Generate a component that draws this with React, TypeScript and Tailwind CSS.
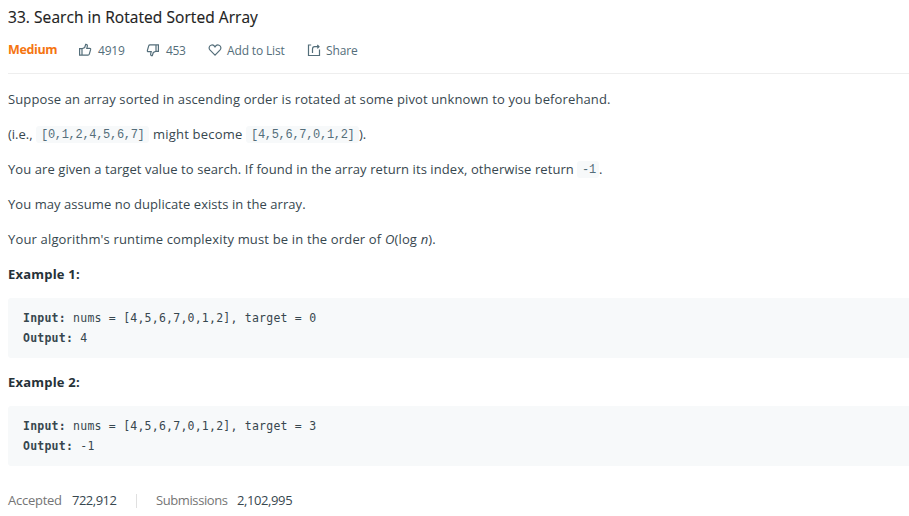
import type { ReactNode } from "react";

const iconProps = {
  viewBox: "0 0 14 14",
  fill: "none",
  stroke: "currentColor",
  strokeWidth: 1.2,
  className: "h-3.5 w-3.5 shrink-0",
};

const Thumb = () => (
  <svg {...iconProps}>
    <path d="M4 5.6H1.6V12.2H4ZM4 5.8L6.7 4.5L7.7 1.3C9.1 1.2 9.6 2.3 9.3 3.4L8.8 5.3H11.6C12.5 5.3 12.8 5.9 12.6 6.7L11.3 11.2C11.1 11.9 10.7 12.2 10 12.2H4" />
  </svg>
);
const ThumbDown = () => (
  <svg {...iconProps}>
    <path d="M10 8.4H12.4V1.8H10ZM10 8.2L7.3 9.5L6.3 12.7C4.9 12.8 4.4 11.7 4.7 10.6L5.2 8.7H2.4C1.5 8.7 1.2 8.1 1.4 7.3L2.7 2.8C2.9 2.1 3.3 1.8 4 1.8H10" />
  </svg>
);
const Heart = () => (
  <svg {...iconProps}>
    <path d="M7 12.1L2.1 7.2C.4 5.4 1 2.9 3 2.2C4.6 1.6 6.1 2.4 7 3.9C7.9 2.4 9.4 1.6 11 2.2C13 2.9 13.6 5.4 11.9 7.2Z" />
  </svg>
);
const ShareIcon = () => (
  <svg {...iconProps}>
    <path d="M4.2 2H1.5V12.5H12.5V6.5M5.5 10V6C5.5 4.5 6.1 3.7 7.6 3.7H11.8M10.3 2L12 3.7L10.3 5.4" />
  </svg>
);

const Code = ({ children, width }: { children: ReactNode; width: string }) => (
  <code className={`mt-0.5 inline-block h-[17px] rounded-[3px] bg-[#f7f9fa] pl-[5px] font-['Liberation_Mono',monospace] text-[12px] leading-[18px] tracking-[-0.3px] text-[#546e7a] ${width}`}>
    {children}
  </code>
);

const Line = ({ children, spacing }: { children: ReactNode; spacing: string }) => (
  <p className={`mb-3.5 h-[21px] ${spacing}`}>{children}</p>
);

const Example = ({ n, target, output }: { n: number; target: number; output: string }) => (
  <section className="text-[#263238]">
    <h2 className="h-[21px] font-bold tracking-[0.2px]">Example {n}:</h2>
    <pre className="mt-[13px] mb-3.5 h-[60px] rounded-l-[3px] bg-[#f7f9fa] px-[15px] py-2.5 font-['DejaVu_Sans_Mono',monospace] text-[11.5px] leading-5 tracking-[0.23px] text-[#37474f]">
      <b>Input:</b> nums = [4,5,6,7,0,1,2], target = {target}{"\n"}
      <b>Output:</b> {output}
    </pre>
  </section>
);

export default function App() {
  return (
    <main className="h-[516px] overflow-hidden bg-white pl-2 font-['Open_Sans',sans-serif] text-[13px] leading-[21px] whitespace-nowrap text-[#37474f]">
      <h1 className="h-[38px] pt-[7px] text-[15.5px] font-medium tracking-[0.06px] text-[#212121] [-webkit-text-stroke:0.15px_#212121]">33. Search in Rotated Sorted Array</h1>
      <div className="flex h-[36px] items-start border-b border-[#eeeeee] text-[12px] text-[#546e7a]">
        <span className="w-[70px] pt-px text-[12.5px] leading-[22px] font-bold tracking-[-0.35px] text-[#f57510]">Medium</span>
        <span className="flex h-6 w-[68px] items-center gap-[6px] tracking-[-0.2px]"><Thumb />4919</span>
        <span className="flex h-6 w-[62px] items-center gap-[6px] tracking-[-0.3px]"><ThumbDown />453</span>
        <span className="flex h-6 w-[99px] items-center gap-[5px] tracking-[-0.15px]"><Heart />Add to List</span>
        <span className="flex h-6 items-center gap-[5px] tracking-[-0.3px]"><ShareIcon /><span className="tracking-[-0.1px]">Share</span></span>
      </div>
      <article className="pt-[15px]">
        <Line spacing="tracking-[0.125px]">Suppose an array sorted in ascending order is rotated at some pivot unknown to you beforehand.</Line>
        <Line spacing="tracking-[0px]">
          <span className="inline-flex">
            <span className="w-7">(i.e.,</span>
            <Code width="w-[113px]">[0,1,2,4,5,6,7]</Code>
            <span className="w-[97px] pl-1 tracking-[0.2px]">might become</span>
            <Code width="w-[113px]">[4,5,6,7,0,1,2]</Code>
            <span>).</span>
          </span>
        </Line>
        <Line spacing="tracking-[0.075px]">
          <span className="inline-flex">
            <span className="w-[569px]">You are given a target value to search. If found in the array return its index, otherwise return</span>
            <Code width="w-[22px]">-1</Code>
            <span>.</span>
          </span>
        </Line>
        <Line spacing="tracking-[0.055px]">You may assume no duplicate exists in the array.</Line>
        <Line spacing="tracking-[0.16px]">Your algorithm's runtime complexity must be in the order of <i>O</i>(log <i>n</i>).</Line>
        <Example n={1} target={0} output="4" />
        <Example n={2} target={3} output="-1" />
      </article>
      <footer className="flex items-center pt-[10px]">
        <span className="w-16 tracking-[-0.25px] text-[#757575]">Accepted</span>
        <span className="w-16 tracking-[-0.5px]">722,912</span>
        <i className="h-3.5 w-px bg-[#e0e0e0]" />
        <span className="ml-[19px] w-[81px] tracking-[-0.4px] text-[#757575]">Submissions</span>
        <span className="tracking-[-0.4px]">2,102,995</span>
      </footer>
    </main>
  );
}
